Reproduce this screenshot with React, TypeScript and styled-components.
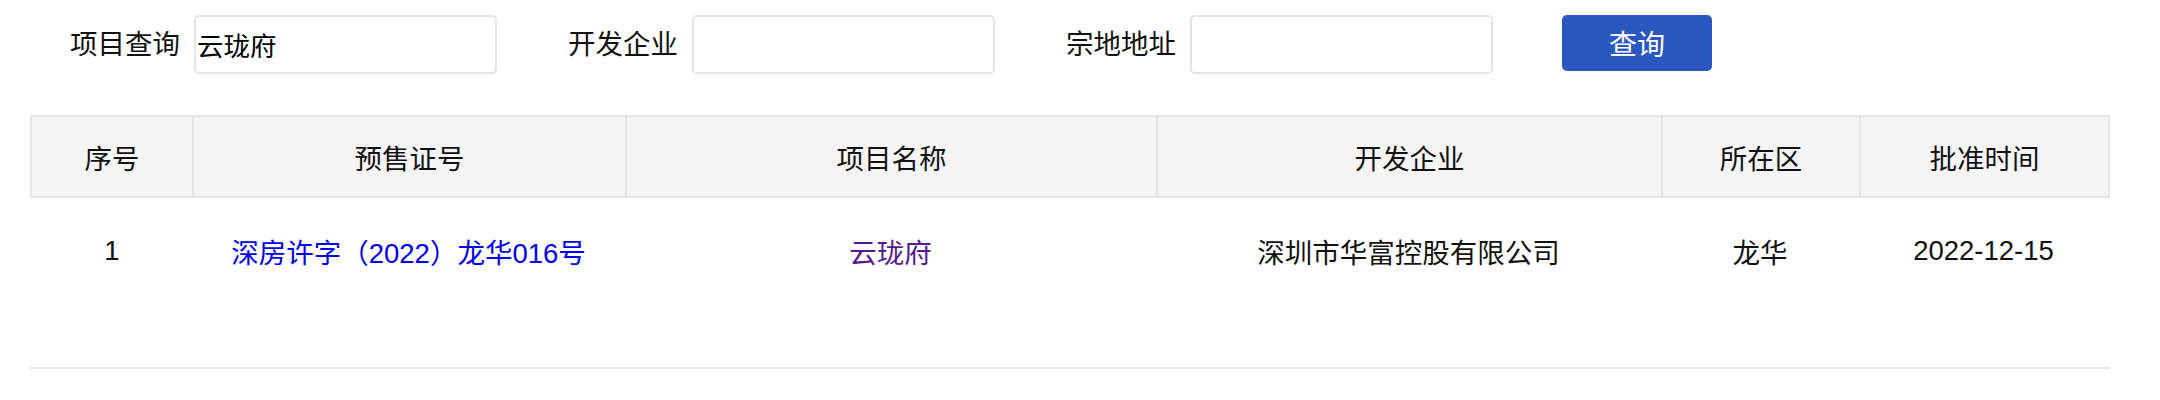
import styled, { createGlobalStyle } from "styled-components";

const GlobalStyle = createGlobalStyle`
  html, body {
    margin: 0;
    padding: 0;
    background: #ffffff;
  }
  body {
    font-family: "Liberation Sans", "Noto Sans CJK SC", sans-serif;
    color: #111111;
  }
`;

const columns = "160px 433px 531px 505px 198px 1fr";

const Page = styled.div`
  padding: 15px 0 0 30px;
`;

const SearchBar = styled.form`
  display: flex;
  align-items: center;
  height: 59px;
  padding-left: 40px;
`;

const Field = styled.label`
  display: flex;
  align-items: center;
  gap: 14px;
  margin-right: 71px;
`;

const FieldLabel = styled.span`
  font-size: 27.5px;
  line-height: 1;
  white-space: nowrap;
  color: #111111;
`;

const Input = styled.input`
  box-sizing: border-box;
  width: 303px;
  height: 59px;
  padding: 0 1px;
  border: 2px solid #e4e4e4;
  border-radius: 5px;
  font-family: "Liberation Sans", "Noto Sans CJK SC", sans-serif;
  font-size: 26.5px;
  color: #000000;
  outline: none;
`;

const SearchButton = styled.button`
  width: 150px;
  height: 56px;
  margin-top: -3px;
  margin-left: -2px;
  border: none;
  border-radius: 5px;
  background: #2b57c1;
  color: #ffffff;
  font-family: "Liberation Sans", "Noto Sans CJK SC", sans-serif;
  font-size: 28px;
  cursor: pointer;
`;

const Table = styled.div`
  width: 2080px;
  margin-top: 41px;
  border-bottom: 2px solid #e6e6e6;
`;

const HeadRow = styled.div`
  display: grid;
  grid-template-columns: ${columns};
  box-sizing: border-box;
  height: 83px;
  background: #f4f4f4;
  border: 2px solid #e6e6e6;
`;

const HeadCell = styled.div<{ $first?: boolean }>`
  display: flex;
  align-items: center;
  justify-content: center;
  border-left: ${(p) => (p.$first ? "none" : "2px solid #e6e6e6")};
  font-size: 27.5px;
  color: #111111;
`;

const Body = styled.div`
  min-height: 169px;
`;

const BodyRow = styled.div`
  display: grid;
  grid-template-columns: ${columns};
  height: 106px;
  padding: 0 2px;
  align-items: center;
`;

const Cell = styled.div`
  display: flex;
  justify-content: center;
  font-size: 27.5px;
  color: #111111;
`;

const CellLink = styled.a<{ $visited?: boolean }>`
  color: ${(p) => (p.$visited ? "#551a8b" : "#0000ee")};
  text-decoration: none;
`;

const headers = ["序号", "预售证号", "项目名称", "开发企业", "所在区", "批准时间"];

const rows = [
  {
    no: "1",
    permit: "深房许字（2022）龙华016号",
    name: "云珑府",
    developer: "深圳市华富控股有限公司",
    district: "龙华",
    date: "2022-12-15",
  },
];

function App() {
  return (
    <Page>
      <GlobalStyle />
      <SearchBar onSubmit={(e) => e.preventDefault()}>
        <Field>
          <FieldLabel>项目查询</FieldLabel>
          <Input defaultValue="云珑府" />
        </Field>
        <Field>
          <FieldLabel>开发企业</FieldLabel>
          <Input />
        </Field>
        <Field>
          <FieldLabel>宗地地址</FieldLabel>
          <Input />
        </Field>
        <SearchButton type="submit">查询</SearchButton>
      </SearchBar>

      <Table>
        <HeadRow>
          {headers.map((h, i) => (
            <HeadCell key={h} $first={i === 0}>
              {h}
            </HeadCell>
          ))}
        </HeadRow>
        <Body>
          {rows.map((r) => (
            <BodyRow key={r.no}>
              <Cell>{r.no}</Cell>
              <Cell>
                <CellLink href="#">{r.permit}</CellLink>
              </Cell>
              <Cell>
                <CellLink href="#" $visited>
                  {r.name}
                </CellLink>
              </Cell>
              <Cell>{r.developer}</Cell>
              <Cell>{r.district}</Cell>
              <Cell>{r.date}</Cell>
            </BodyRow>
          ))}
        </Body>
      </Table>
    </Page>
  );
}

export default App;
